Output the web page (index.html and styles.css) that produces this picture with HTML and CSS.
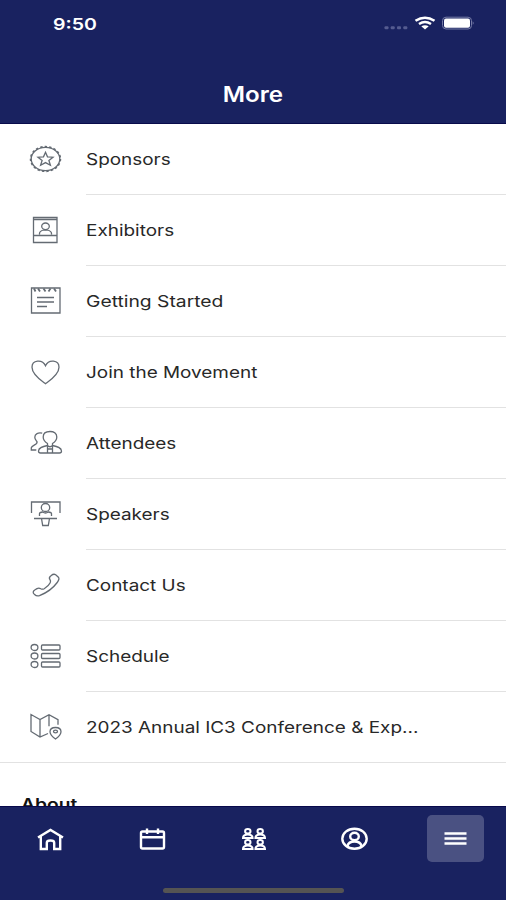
FILE: index.html
```html
<!DOCTYPE html>
<html lang="en">
<head>
<meta charset="utf-8">
<title>More</title>
<link rel="stylesheet" href="styles.css">
</head>
<body>
<div class="app">
  <header class="header">
    <div class="status">
      <span class="time">9:50</span>
      <svg class="status-icons" width="94" height="20" viewBox="0 0 94 20">
        <g fill="#555c90"><rect x="4.500" y="16.300" width="4" height="3" rx="1"/><rect x="10.700" y="16.300" width="4" height="3" rx="1"/><rect x="17" y="16.300" width="4" height="3" rx="1"/><rect x="23.300" y="16.300" width="4" height="3" rx="1"/></g>
        <g fill="none" stroke="#fff" stroke-width="2.500"><path d="M35.500 10.800Q45 4.500 54.500 10.800"/><path d="M39 14Q45 10 51 14"/></g>
        <path d="M41.300 16.300Q45 14 48.700 16.300L45 19.500z" fill="#fff"/>
        <rect x="62.500" y="7.200" width="29" height="11.800" rx="3.500" fill="#192260" stroke="#757ba6"/>
        <rect x="64" y="8.500" width="26" height="9.300" rx="2" fill="#fff"/>
        <path d="M92.700 11.200q2 1.800 0 3.600z" fill="#757ba6"/>
      </svg>
    </div>
    <h1 class="title">More</h1>
  </header>
  <main class="content">
    <ul class="list">
      <li class="row"><svg class="icon" viewBox="0 0 36 36"><ellipse cx="18.500" cy="18" rx="14.300" ry="11.700"/><ellipse class="scallop" cx="18.500" cy="18" rx="14.900" ry="12.300"/><path d="M18.500 11.300l2 4.500 5.500.4-4.100 3.200 1.500 4.800-4.900-2.600-4.900 2.600 1.500-4.800-4.100-3.200 5.500-.4z"/></svg><div class="cell"><span class="label">Sponsors</span></div></li>
      <li class="row"><svg class="icon" viewBox="0 0 36 36"><path d="M6.500 5.500h23.500v25h-23.500zM6.500 7.500h23.500M6.500 23.500h23.500M12.500 22.500v-1q0-2.300 4-3.500h4q4 1.200 4 3.500v1"/><ellipse cx="18.500" cy="14.300" rx="3.800" ry="3.300"/></svg><div class="cell"><span class="label">Exhibitors</span></div></li>
      <li class="row"><svg class="icon" viewBox="0 0 36 36"><path d="M4.500 5h28.500v25h-28.500z"/><path class="bold" d="M7 5.500l1.500 3M11 5.500l2 3M16.500 5.500l2 3M21.500 8.500l2-3M27 5.500l2 3"/><path d="M10 14.500h17M10 19h17M10 23.500h10"/></svg><div class="cell"><span class="label wide">Getting Started</span></div></li>
      <li class="row"><svg class="icon" viewBox="0 0 36 36"><path d="M18.500 29.800C14 26.400 5 20.500 5 13.200C5 5.900 15.300 5 18.500 11.800C21.700 5 32 5.900 32 13.200C32 20.500 23 26.400 18.500 29.800z"/></svg><div class="cell"><span class="label">Join the Movement</span></div></li>
      <li class="row"><svg class="icon" viewBox="0 0 36 36"><path d="M20.500 20.500v-2c-2.700-1.700-4.300-4.200-4.300-6.500c0-3.800 3-5.500 6.800-5.500s6.800 1.700 6.800 5.500c0 2.300-1.600 4.800-4.300 6.500v2c4.700 1 9 2 9 5.500c0 1.500-.5 2-2 2h-19c-1.500 0-2-.5-2-2c0-3.500 4.300-4.500 9-5.500q2.500 2.500 5 0M20.500 20.500v7M25.500 20.500v7M21 24h4M15.200 8.200c-4-.9-7.400.8-7.400 4c0 2.300 1.500 3.400 2.200 4.500c1 3-5 3.500-5.700 6v2.300h5"/></svg><div class="cell"><span class="label">Attendees</span></div></li>
      <li class="row"><svg class="icon" viewBox="0 0 36 36"><path d="M4.500 17v-11h28.500v11M7 22.500h23M12.500 20v-2.500q0-1 3.300-1.500q2.700 2 5.400 0q3.300.5 3.300 1.500v2.500M14.500 22.500l1.200 7h5.600l1.200-7"/><ellipse cx="18.500" cy="11.500" rx="4.200" ry="4"/></svg><div class="cell"><span class="label">Speakers</span></div></li>
      <li class="row"><svg class="icon" viewBox="0 0 36 36"><path d="M24.300 8.500q2.200-2 4.400-.8l2.700 2.500q1.500 1.800-1.200 5.300Q24 24 12.500 28.700q-3 .8-4.900-1.200q-3.100-2.500.5-4.700l1.900-1.200q1.800-1.100 3.800.1q1.700.9 3.400 0q4.400-2.700 6-6q.8-1.600-.2-3.100q-1.400-1.800.4-3.400z"/></svg><div class="cell"><span class="label">Contact Us</span></div></li>
      <li class="row"><svg class="icon" viewBox="0 0 36 36"><g><ellipse cx="7.500" cy="9.500" rx="3.400" ry="3"/><ellipse cx="7.500" cy="18" rx="3.400" ry="3"/><ellipse cx="7.500" cy="26.500" rx="3.400" ry="3"/><rect x="14.500" y="7" width="18.500" height="5" rx="1"/><rect x="14.500" y="15.500" width="18.500" height="5" rx="1"/><rect x="14.500" y="24" width="18.500" height="5" rx="1"/></g></svg><div class="cell"><span class="label">Schedule</span></div></li>
      <li class="row last"><svg class="icon" viewBox="0 0 36 36"><path d="M21 24.500l-8 3.500-9-5.500v-17l9 5 9-4.800 9 5v5M13 10.500v17.500M22 5.700v11.500M28.500 30q-5.500-4-5.500-7.300q0-4.200 5.500-4.200t5.500 4.200q0 3.300-5.500 7.300z"/><ellipse cx="28.500" cy="22.500" rx="2" ry="1.400"/></svg><div class="cell"><span class="label">2023 Annual IC3 Conference &amp; Exp...</span></div></li>
    </ul>
    <h2 class="section">About</h2>
  </main>
  <footer class="footer">
    <nav class="tabs">
      <a class="tab"><svg viewBox="0 0 32 28"><path d="M3 12.500L15.500 5l12.500 7.500M5.800 11.300v12.700h6v-6.300q0-2.200 3.700-2.200t3.700 2.200v6.300h6v-12.700"/></svg></a>
      <a class="tab"><svg viewBox="0 0 32 28"><path d="M6.500 6.500h20q1.500 0 1.500 1.500v14q0 1.500-1.500 1.500h-20q-1.500 0-1.500-1.500v-14q0-1.500 1.500-1.500zM5 12.300h23M11 3.500v5.500M22 3.500v5.500"/></svg></a>
      <a class="tab"><svg class="people" viewBox="0 0 32 28"><g><ellipse cx="10.800" cy="6.200" rx="2.700" ry="2.300"/><path d="M6 13q0-3.500 4.800-3.500t4.800 3.500z"/><ellipse cx="23.200" cy="6.200" rx="2.700" ry="2.300"/><path d="M18.400 13q0-3.500 4.800-3.500t4.800 3.500z"/><ellipse cx="10.800" cy="17.200" rx="2.700" ry="2.300"/><path d="M6 24q0-3.500 4.800-3.500t4.800 3.500z"/><ellipse cx="23.200" cy="17.200" rx="2.700" ry="2.300"/><path d="M18.400 24q0-3.500 4.800-3.500t4.800 3.500z"/></g></svg></a>
      <a class="tab"><svg viewBox="0 0 32 28"><ellipse cx="16.500" cy="13.700" rx="12.200" ry="10"/><ellipse cx="16.500" cy="11.500" rx="4.300" ry="3.700"/><path d="M9.500 21q1-4.500 7-4.500t7 4.500"/></svg></a>
      <a class="tab active"><svg viewBox="0 0 32 28"><path d="M5.500 8.500h22M5.500 13.500h22M5.500 18.500h22"/></svg></a>
    </nav>
    <div class="indicator"></div>
  </footer>
</div>
</body>
</html>
```
FILE: styles.css
```css
* { box-sizing: border-box; }
body { margin: 0; font-family: Inter, "Liberation Sans", sans-serif; background: #fff; }
.app { display: flex; flex-direction: column; height: 900px; overflow: hidden; }
.header { height: 124px; flex: none; background: #192260; color: #fff; border-bottom: 1px solid #080b4b; }
.status { display: flex; justify-content: space-between; height: 48px; padding: 10px 32px 0 53px; }
.time { font-size: 16px; line-height: 28px; font-weight: 600; transform: scaleX(1.22); transform-origin: left; }
.title { margin: 33px 0 0; font-size: 21px; line-height: 28px; font-weight: 600; text-align: center; transform: scaleX(1.15); }
.content { flex: 1; min-height: 0; overflow: hidden; }
.list { list-style: none; margin: 0; padding: 0; }
.row { display: flex; height: 71px; padding-left: 27px; }
.icon { width: 36px; height: 36px; margin: 17px 23px 0 0; flex: none; fill: none; stroke: #646b73; stroke-width: 1.3; }
.scallop { stroke-width: 1.7; stroke-dasharray: 2.4 2.1; }
.bold { stroke-width: 1.8; }
.cell { flex: 1; border-bottom: 1px solid #e2e2e2; }
.last { border-bottom: 1px solid #e2e2e2; }
.last .cell { border: 0; }
.label { display: inline-block; font-size: 16px; line-height: 70px; color: #282828; white-space: nowrap; transform: scaleX(1.183); transform-origin: left; }
.wide { transform: scaleX(1.205); }
.section { margin: 29px 0 0 21px; font-size: 16px; line-height: 24px; font-weight: 600; color: #111; transform: scaleX(1.2); transform-origin: left; }
.footer { height: 94px; flex: none; background: #192260; border-top: 1px solid #07094b; }
.tabs { display: grid; grid-template-columns: repeat(5, 1fr); justify-items: center; padding-top: 8px; }
.tab { display: flex; align-items: center; justify-content: center; width: 57px; height: 47px; border-radius: 5px; }
.tab svg { width: 32px; height: 28px; fill: none; stroke: #fff; stroke-width: 2.4; }
.tab .people { stroke-width: 2; }
.active { background: #4a5182; }
.indicator { width: 181px; height: 5px; margin: 26px auto 0; border-radius: 3px; background: #555453; }
```
